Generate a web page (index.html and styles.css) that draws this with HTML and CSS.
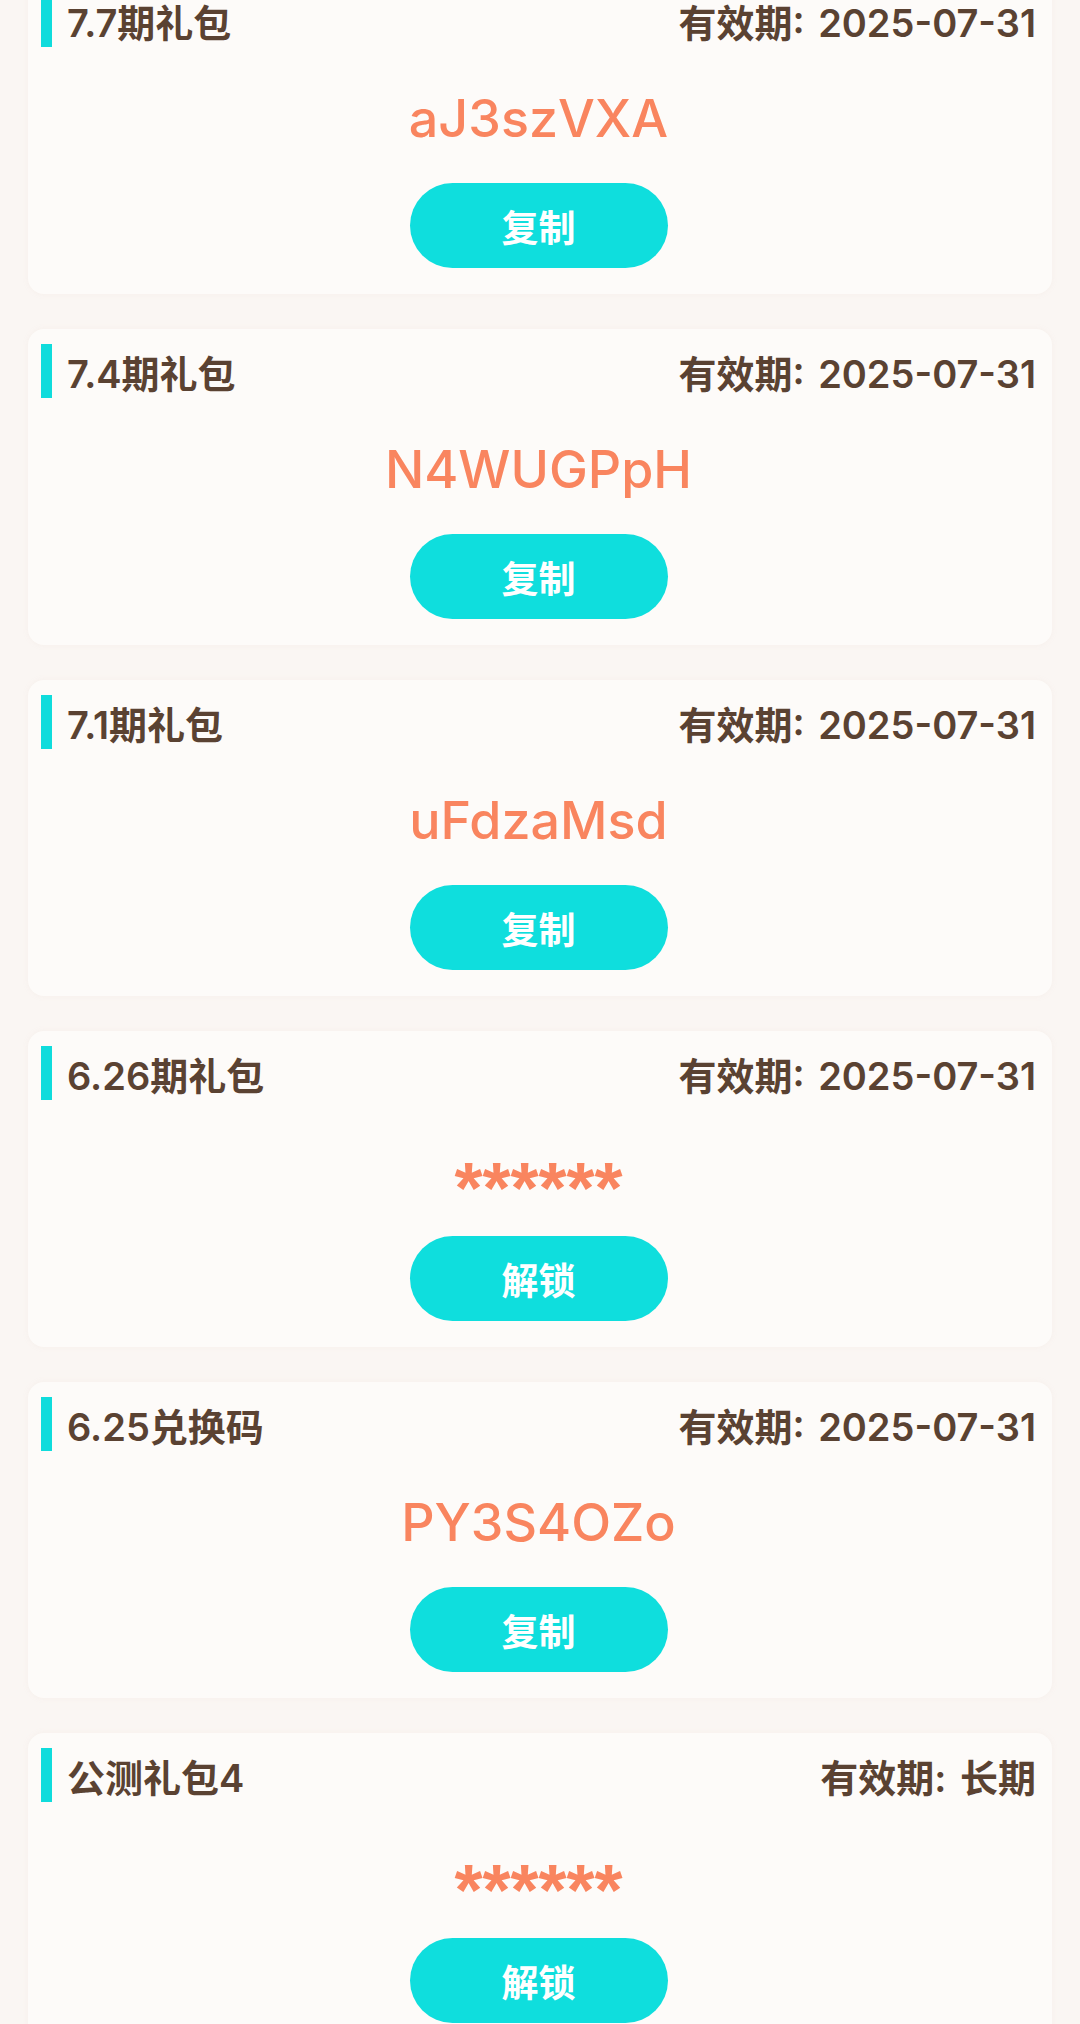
FILE: index.html
```html
<!DOCTYPE html>
<html lang="zh-CN">
<head>
    <meta charset="UTF-8">
    <meta name="viewport" content="width=device-width, initial-scale=1.0">
    <title>礼包兑换码</title>
    <link rel="stylesheet" href="styles.css">
</head>
<body>
    <div class="gift-list">
        <div class="gift-card">
            <div class="gift-head">
                <span class="gift-title">7.7期礼包</span>
                <span class="gift-expire">有效期: 2025-07-31</span>
            </div>
            <div class="gift-code">aJ3szVXA</div>
            <button class="gift-btn">复制</button>
        </div>

        <div class="gift-card">
            <div class="gift-head">
                <span class="gift-title">7.4期礼包</span>
                <span class="gift-expire">有效期: 2025-07-31</span>
            </div>
            <div class="gift-code">N4WUGPpH</div>
            <button class="gift-btn">复制</button>
        </div>

        <div class="gift-card">
            <div class="gift-head">
                <span class="gift-title">7.1期礼包</span>
                <span class="gift-expire">有效期: 2025-07-31</span>
            </div>
            <div class="gift-code">uFdzaMsd</div>
            <button class="gift-btn">复制</button>
        </div>

        <div class="gift-card">
            <div class="gift-head">
                <span class="gift-title">6.26期礼包</span>
                <span class="gift-expire">有效期: 2025-07-31</span>
            </div>
            <div class="gift-code gift-code-locked">******</div>
            <button class="gift-btn">解锁</button>
        </div>

        <div class="gift-card">
            <div class="gift-head">
                <span class="gift-title">6.25兑换码</span>
                <span class="gift-expire">有效期: 2025-07-31</span>
            </div>
            <div class="gift-code">PY3S4OZo</div>
            <button class="gift-btn">复制</button>
        </div>

        <div class="gift-card">
            <div class="gift-head">
                <span class="gift-title">公测礼包4</span>
                <span class="gift-expire">有效期: 长期</span>
            </div>
            <div class="gift-code gift-code-locked">******</div>
            <button class="gift-btn">解锁</button>
        </div>
    </div>
</body>
</html>
```

FILE: styles.css
```css
* {
    margin: 0;
    padding: 0;
    box-sizing: border-box;
}

body {
    font-family: Inter, 'Noto Sans CJK SC', sans-serif;
    background: #faf6f3;
    color: #5a4232;
    overflow: hidden;
}

/* list is scrolled a little, first card is cut at the top */
.gift-list {
    display: flex;
    flex-direction: column;
    gap: 35px;
    padding: 0 28px;
    margin-top: -22px;
}

.gift-card {
    display: flex;
    flex-direction: column;
    align-items: center;
    padding: 15px 16px 26px 13px;
    background: #fdfbf9;
    border-radius: 16px;
    box-shadow: 0 0 6px rgba(200, 170, 150, 0.08);
}

.gift-head {
    align-self: stretch;
    display: flex;
    justify-content: space-between;
    align-items: center;
    height: 54px;
}

.gift-title {
    display: flex;
    align-items: center;
    height: 54px;
    padding-left: 15px;
    border-left: 11px solid #10dcdc;
    font-size: 38px;
    font-weight: 600;
}

.gift-expire {
    font-size: 38px;
    font-weight: 600;
    word-spacing: 4px;
}

.gift-code {
    margin-top: 37px;
    height: 70px;
    line-height: 70px;
    font-size: 52px;
    font-weight: 500;
    color: #f9855f;
}

.gift-code-locked {
    font-family: 'Liberation Sans', sans-serif;
    font-size: 72px;
    font-weight: bold;
    padding-top: 16px;
}

.gift-btn {
    margin-top: 29px;
    width: 258px;
    height: 85px;
    border: none;
    border-radius: 43px;
    background: #0fdedd;
    color: #fff;
    font-family: 'Noto Sans CJK SC', sans-serif;
    font-size: 37px;
    font-weight: bold;
    cursor: pointer;
}
```
